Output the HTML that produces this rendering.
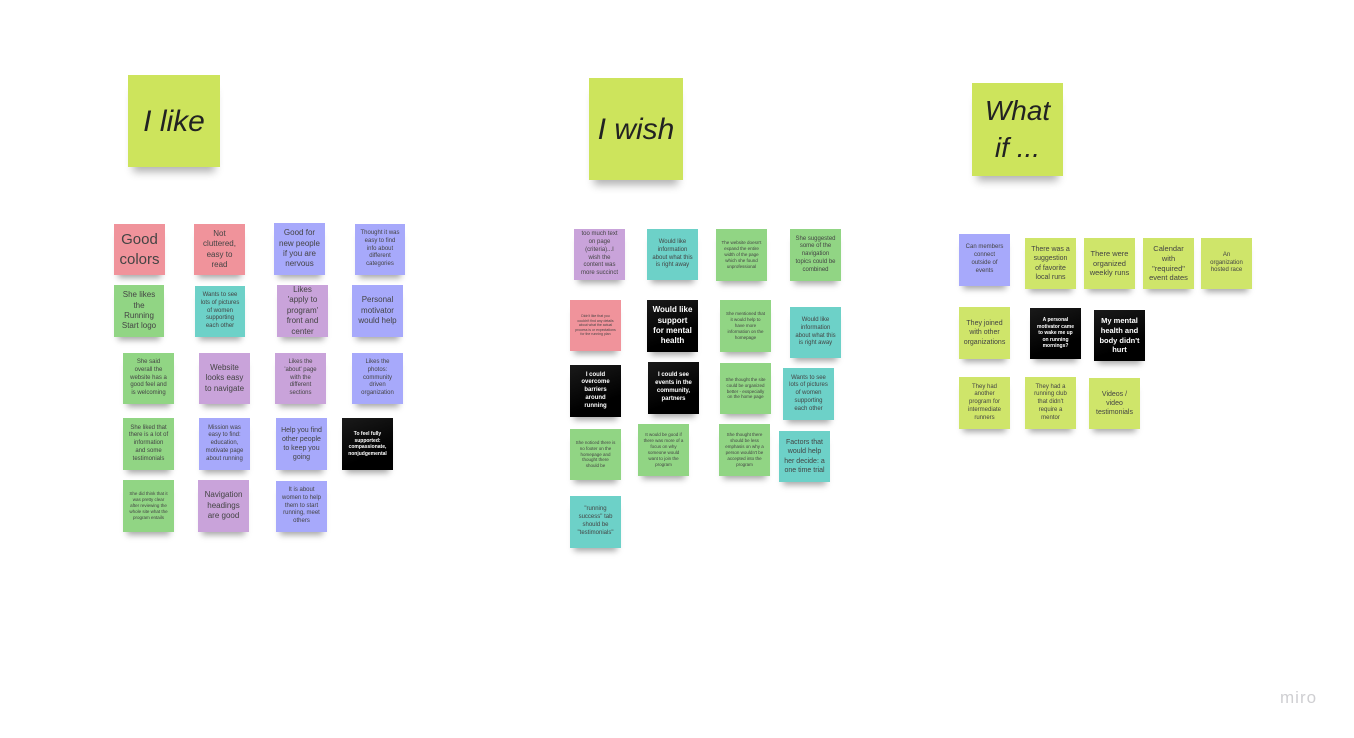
<!DOCTYPE html>
<html><head><meta charset="utf-8"><style>
html,body{margin:0;padding:0;background:#fff;width:1354px;height:738px;overflow:hidden}
body{position:relative;font-family:"Liberation Sans","DejaVu Sans",sans-serif}
.n{position:absolute;display:flex;align-items:center;justify-content:center;text-align:center;box-sizing:border-box;padding:2px 5px;color:#444;line-height:1.3;box-shadow:0 7px 6px -4px rgba(0,0,0,.35)}
.pk{background:#f0939b}.bl{background:#a7a9fb}.pu{background:#c9a3da}.gr{background:#91d584}.te{background:#6dd1c8}.yg{background:#cfe56a}.bk{color:#fff;font-weight:bold;background:linear-gradient(160deg,#1a1a1a,#000 70%)}
.h{background:#cde45c;font-style:italic;color:#222;font-size:30px;line-height:1.3;box-shadow:0 10px 8px -5px rgba(0,0,0,.3)}
.L{font-size:15px;line-height:1.3}.M{font-size:8px}.S{font-size:6px}.T{font-size:4.5px}
.miro{position:absolute;left:1280px;top:688px;font-size:17px;color:#cfcfd2;letter-spacing:1px}
</style></head><body>
<div class="n h" style="left:128px;top:75px;width:92px;height:92px">I like</div>
<div class="n h" style="left:589px;top:78px;width:94px;height:102px">I wish</div>
<div class="n h" style="left:972px;top:83px;width:91px;height:93px;font-size:28px">What<br>if ...</div>

<div class="n pk L" style="left:114px;top:224px;width:51px;height:51px">Good colors</div>
<div class="n pk M" style="left:194px;top:224px;width:51px;height:51px">Not cluttered, easy to read</div>
<div class="n bl M" style="left:274px;top:223px;width:51px;height:52px">Good for new people if you are nervous</div>
<div class="n bl S" style="left:355px;top:224px;width:50px;height:51px">Thought it was easy to find info about different categories</div>
<div class="n gr M" style="left:114px;top:285px;width:50px;height:52px">She likes the Running Start logo</div>
<div class="n te S" style="left:195px;top:286px;width:50px;height:51px">Wants to see lots of pictures of women supporting each other</div>
<div class="n pu M" style="left:277px;top:285px;width:51px;height:52px">Likes 'apply to program' front and center</div>
<div class="n bl M" style="left:352px;top:285px;width:51px;height:52px">Personal motivator would help</div>
<div class="n gr S" style="left:123px;top:353px;width:51px;height:51px">She said overall the website has a good feel and is welcoming</div>
<div class="n pu M" style="left:199px;top:353px;width:51px;height:51px">Website looks easy to navigate</div>
<div class="n pu S" style="left:275px;top:353px;width:51px;height:51px">Likes the 'about' page with the different sections</div>
<div class="n bl S" style="left:352px;top:353px;width:51px;height:51px">Likes the photos: community driven organization</div>
<div class="n gr S" style="left:123px;top:418px;width:51px;height:52px">She liked that there is a lot of information and some testimonials</div>
<div class="n bl S" style="left:199px;top:418px;width:51px;height:52px">Mission was easy to find: education, motivate page about running</div>
<div class="n bl S" style="left:276px;top:418px;width:51px;height:52px;font-size:7px">Help you find other people to keep you going</div>
<div class="n bk S" style="left:342px;top:418px;width:51px;height:52px;font-size:5px">To feel fully supported: compassionate, nonjudgemental</div>
<div class="n gr T" style="left:123px;top:480px;width:51px;height:52px">She did think that it was pretty clear after reviewing the whole site what the program entails</div>
<div class="n pu M" style="left:198px;top:480px;width:51px;height:52px">Navigation headings are good</div>
<div class="n bl S" style="left:276px;top:481px;width:51px;height:51px">It is about women to help them to start running, meet others</div>

<div class="n pu S" style="left:574px;top:229px;width:51px;height:51px">too much text on page (criteria)...I wish the content was more succinct</div>
<div class="n te S" style="left:647px;top:229px;width:51px;height:51px">Would like information about what this is right away</div>
<div class="n gr T" style="left:716px;top:229px;width:51px;height:52px">The website doesn't expand the entire width of the page which she found unprofessional</div>
<div class="n gr S" style="left:790px;top:229px;width:51px;height:52px">She suggested some of the navigation topics could be combined</div>
<div class="n pk T" style="left:570px;top:300px;width:51px;height:51px;font-size:3.5px">Didn't like that you couldn't find any details about what the actual process is or expectations for the running plan</div>
<div class="n bk M" style="left:647px;top:300px;width:51px;height:52px">Would like support for mental health</div>
<div class="n gr T" style="left:720px;top:300px;width:51px;height:52px">She mentioned that it would help to have more information on the homepage</div>
<div class="n te S" style="left:790px;top:307px;width:51px;height:51px">Would like information about what this is right away</div>
<div class="n bk S" style="left:570px;top:365px;width:51px;height:52px">I could overcome barriers around running</div>
<div class="n bk S" style="left:648px;top:362px;width:51px;height:52px">I could see events in the community, partners</div>
<div class="n gr T" style="left:720px;top:363px;width:51px;height:51px">She thought the site could be organized better - exspecially on the home page</div>
<div class="n te S" style="left:783px;top:368px;width:51px;height:52px">Wants to see lots of pictures of women supporting each other</div>
<div class="n gr T" style="left:570px;top:429px;width:51px;height:51px">She noticed there is no footer on the homepage and thought there should be</div>
<div class="n gr T" style="left:638px;top:424px;width:51px;height:52px">It would be good if there was more of a focus on why someone would want to join the program</div>
<div class="n gr T" style="left:719px;top:424px;width:51px;height:52px">She thought there should be less emphasis on why a person wouldn't be accepted into the program</div>
<div class="n te S" style="left:779px;top:431px;width:51px;height:51px;font-size:7px">Factors that would help her decide: a one time trial</div>
<div class="n te S" style="left:570px;top:496px;width:51px;height:52px">"running success" tab should be "testimonials"</div>

<div class="n bl S" style="left:959px;top:234px;width:51px;height:52px">Can members connect outside of events</div>
<div class="n yg S" style="left:1025px;top:238px;width:51px;height:51px;font-size:7px">There was a suggestion of favorite local runs</div>
<div class="n yg S" style="left:1084px;top:238px;width:51px;height:51px;font-size:7.5px">There were organized weekly runs</div>
<div class="n yg S" style="left:1143px;top:238px;width:51px;height:51px;font-size:7.5px">Calendar with "required" event dates</div>
<div class="n yg S" style="left:1201px;top:238px;width:51px;height:51px">An organization hosted race</div>
<div class="n yg S" style="left:959px;top:307px;width:51px;height:52px;font-size:7px">They joined with other organizations</div>
<div class="n bk T" style="left:1030px;top:308px;width:51px;height:51px;font-size:5px">A personal motivator came to wake me up on running mornings?</div>
<div class="n bk S" style="left:1094px;top:310px;width:51px;height:51px;font-size:7.5px">My mental health and body didn't hurt</div>
<div class="n yg S" style="left:959px;top:377px;width:51px;height:52px">They had another program for intermediate runners</div>
<div class="n yg S" style="left:1025px;top:377px;width:51px;height:52px">They had a running club that didn't require a mentor</div>
<div class="n yg S" style="left:1089px;top:378px;width:51px;height:51px;font-size:7px">Videos / video testimonials</div>

<div class="miro">miro</div>
</body></html>
